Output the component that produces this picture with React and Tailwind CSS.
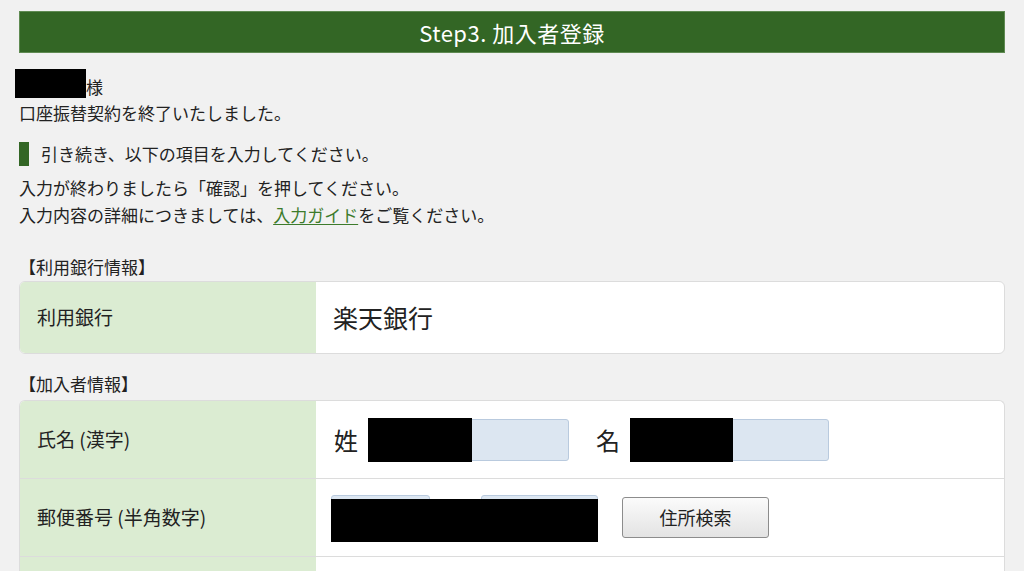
export default function App() {
  const font = { fontFamily: '"Noto Sans CJK JP", "Noto Sans", sans-serif' };
  return (
    <div className="min-h-screen w-full bg-[#f1f1f1] px-[19px] pt-[11px] text-[#222]" style={font}>
      <div className="flex h-[42px] w-[986px] items-center justify-center border border-[#5f8a52] bg-[#336625] text-[22px] tracking-[0.5px] text-white">
        Step3. 加入者登録
      </div>

      <div className="-ml-[4px] mt-[16px] flex items-end">
        <div className="h-[29px] w-[71px] bg-black" />
        <span className="text-[17px] leading-[22px]">様</span>
      </div>
      <div className="mt-[3px] text-[17px] leading-[24px]">口座振替契約を終了いたしました。</div>

      <div className="mt-[17px] flex items-center">
        <div className="h-[24px] w-[10px] bg-[#336625]" />
        <span className="ml-[12px] text-[17px] leading-[24px]">引き続き、以下の項目を入力してください。</span>
      </div>

      <div className="mt-[8px] text-[17px] leading-[27px]">
        <div>入力が終わりましたら「確認」を押してください。</div>
        <div>
          入力内容の詳細につきましては、
          <span className="text-[#3d7b2c] underline underline-offset-2">入力ガイド</span>
          をご覧ください。
        </div>
      </div>

      <div className="mt-[27px] text-[17px] leading-[24px]">【利用銀行情報】</div>
      <div className="mt-[2px] flex h-[73px] w-[986px] overflow-hidden rounded-[6px] border border-[#dcdcdc] bg-white">
        <div className="flex w-[296px] items-center bg-[#dbecd2] pl-[17px] text-[19px]">利用銀行</div>
        <div className="flex flex-1 items-center pl-[17px] text-[25px]">楽天銀行</div>
      </div>

      <div className="mt-[18px] text-[17px] leading-[24px]">【加入者情報】</div>
      <div className="mt-[4px] w-[986px] overflow-hidden rounded-t-[6px] border border-b-0 border-[#dcdcdc] bg-white">
        <div className="flex h-[78px] border-b border-[#dcdcdc]">
          <div className="flex w-[296px] items-center bg-[#dbecd2] pl-[17px] text-[19px]">氏名 (漢字)</div>
          <div className="flex flex-1 items-center pl-[18px]">
            <span className="text-[24px]">姓</span>
            <div className="relative ml-[10px] h-[42px] w-[201px] rounded-[3px] border border-[#b9cade] bg-[#dce6f1]">
              <div className="absolute -left-px -top-[2px] h-[44px] w-[104px] bg-black" />
            </div>
            <span className="ml-[27px] text-[24px]">名</span>
            <div className="relative ml-[10px] h-[42px] w-[199px] rounded-[3px] border border-[#b9cade] bg-[#dce6f1]">
              <div className="absolute -left-px -top-[2px] h-[44px] w-[103px] bg-black" />
            </div>
          </div>
        </div>
        <div className="flex h-[78px] border-b border-[#dcdcdc]">
          <div className="flex w-[296px] items-center bg-[#dbecd2] pl-[17px] text-[19px]">郵便番号 (半角数字)</div>
          <div className="flex flex-1 items-center pl-[15px]">
            <div className="relative flex h-[46px] w-[267px] items-start">
              <div className="h-[42px] w-[99px] rounded-[3px] border border-[#b9cade] bg-[#dce6f1]" />
              <span className="mx-auto pt-[8px] text-[18px]">-</span>
              <div className="h-[42px] w-[117px] rounded-[3px] border border-[#b9cade] bg-[#dce6f1]" />
              <div className="absolute left-0 top-[4px] h-[43px] w-[267px] bg-black" />
            </div>
            <button className="ml-[24px] h-[41px] w-[147px] rounded-[3px] border border-[#8c8c8c] bg-gradient-to-b from-[#fbfbfb] to-[#e3e3e3] text-[18px] text-[#222]">
              住所検索
            </button>
          </div>
        </div>
        <div className="flex h-[78px]">
          <div className="w-[296px] bg-[#dbecd2]" />
          <div className="flex-1" />
        </div>
      </div>
    </div>
  );
}
